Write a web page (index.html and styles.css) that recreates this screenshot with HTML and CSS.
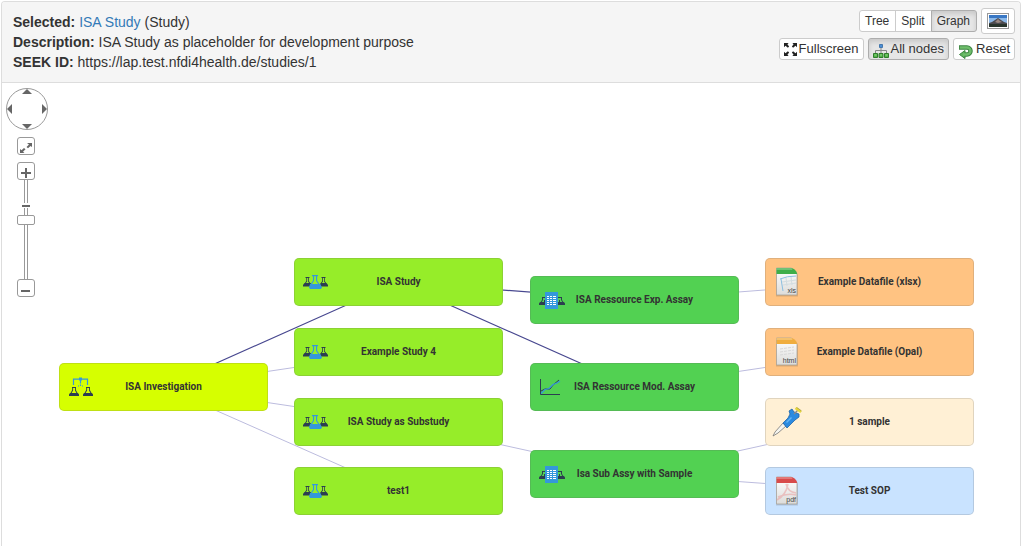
FILE: index.html
```html
<!DOCTYPE html>
<html lang="en">
<head>
<meta charset="utf-8">
<title>ISA Study</title>
<link rel="stylesheet" href="styles.css">
</head>
<body>
<svg class="defs" aria-hidden="true">
  <symbol id="i-study" viewBox="0 0 25 15">
    <g fill="#2c3e50">
      <path d="M2.500 2h4v1h-4zM3.300 3h.8v3.400L2 9.300h-.9L3.300 6zM5 3h.8v3.100L8 9.300H7L5 6.400zM1.500 8h6l1 1.500v2.100H0V10z"/>
      <path d="M18.500 2h4v1h-4zM19.200 3h.8v3.400l-2.100 2.900h-.9L19.200 6zM21 3h.8v3.100L24 9.300h-1L21 6.400zM17.500 8h6l1.500 2v1.600h-8.500z"/>
    </g>
    <path fill="#3498db" d="M9 0h6v1.200H9zM10 1h1.100v4.700L8.300 10H7l3-4.500zM13 1h1.100v4.500l3 4.500h-1.300L13 5.700zM7 9h10.300l1.700 3.500-1 1.500H7l-1-1.500z"/>
  </symbol>
  <symbol id="i-assay" viewBox="0 0 26 17">
    <path fill="#2c3e50" d="M3 5h4v1H3zM3 6h1v2L2 11H1l2-3zM5 8h1v2H5zM1 10h6v3H0v-1.500zM19 5h4v1h-4zM22 6h1v2l2 3h-1l-2-3zM20 8h1v2h-1zM19 10h6l1 1.500V13h-7z"/>
    <path fill="#3498db" d="M6 0h13v17H6z"/>
    <path fill="#fff" d="M8 4h2v1H8zM11 4h2v1h-2zM14 4h3v1h-3zM8 6h2v1H8zM11 6h2v1h-2zM14 6h3v1h-3zM8 8h2v1H8zM11 8h2v1h-2zM14 8h3v1h-3zM8 10h2v1H8zM11 10h2v1h-2zM14 10h3v1h-3zM8 12h2v1H8zM11 12h2v1h-2zM14 12h3v1h-3z"/>
  </symbol>
  <symbol id="i-model" viewBox="0 0 22 17">
    <path fill="none" stroke="#2c3e50" d="M1.500 0v15.500H21M2 12l4-2h5l3-4 6-5"/>
    <path fill="none" stroke="#3498db" stroke-width="1.200" d="M2 14.500l4-4 4-1 4-4 4-1.500 3-2"/>
  </symbol>
  <symbol id="i-investigation" viewBox="0 0 24 20">
    <path fill="none" stroke="#3498db" stroke-width="1.200" d="M4.500 8V2.200h14V8M11.500 2v4.500M11.500 7.500v1.500M9 9h1M13 9h1"/>
    <path fill="#3498db" d="M10 .5h3v3h-3z"/>
    <g fill="#2c3e50">
      <path d="M3 10h4v1H3zM3.200 11h.9v2.500L2 17H1l2.200-4zM6 11h.9v2l2.200 4H8l-2-3.500zM1 16h8l1 1.500V19H0v-1.500z"/>
      <path d="M17 10h4v1h-4zM17.200 11h.9v2.500L16 17h-1l2.200-4zM20 11h.9v2l2.200 4H22l-2-3.500zM15 16h8l1 1.500V19H14v-1.500z"/>
    </g>
  </symbol>
  <linearGradient id="paper" x2="0" y2="1"><stop offset="0" stop-color="#fff"/><stop offset="1" stop-color="#dcdcda"/></linearGradient>
  <symbol id="i-file" viewBox="0 0 24 30">
    <path fill="#0002" d="M1 2h16l6 6v21.500H1z"/>
    <path fill="url(#paper)" stroke="#aaa39a" stroke-width=".8" d="M1.500 1h15l5.500 5.500V28h-20.500z"/>
    <path fill="currentColor" d="M1.500 1h15q4 1 5.500 5v1H1.500z"/>
    <path fill="#fff" opacity=".25" d="M1.500 1h15l1 2h-16z"/>
  </symbol>
</svg>

<section class="panel">
  <header class="head">
    <div class="info">
      <div><b>Selected:</b> <a href="#">ISA Study</a> (Study)</div>
      <div><b>Description:</b> ISA Study as placeholder for development purpose</div>
      <div><b>SEEK ID:</b> https://lap.test.nfdi4health.de/studies/1</div>
    </div>
    <div class="actions">
      <div class="row">
        <div class="group">
          <button class="btn">Tree</button><button class="btn">Split</button><button class="btn active">Graph</button>
        </div>
        <button class="btn picture" aria-label="Save picture">
          <svg width="22" height="16" viewBox="0 0 22 16">
            <path fill="#999" d="M0 0h22v16H0z"/><path fill="#fff" d="M1 1h20v14H1z"/>
            <path fill="#3977c4" d="M2 2h18v4H2z"/><path fill="#8db9e8" d="M2 5h18v6H2z"/>
            <path fill="#4c4b50" d="M2 10l3-1 3-2 3-2 3 2 3 2 3 1v2H2z"/><path fill="#9c8982" d="M8 9l3-3 2 2 2 1-4 1z"/>
            <path fill="#29352d" d="M2 11h18v3H2z"/>
          </svg>
        </button>
      </div>
      <div class="row">
        <button class="btn tool">
          <svg width="13" height="13" viewBox="0 0 14 14"><path fill="#222" d="M0 0h5L3.700 1.300 5.500 3.700 4.200 5 1.600 3 0 4.500zM14 0H9l1.300 1.300L8.500 3.700 9.800 5 12.400 3 14 4.500zM0 14h5l-1.300-1.300L5.500 10.300 4.200 9 1.600 11 0 9.500zM14 14H9l1.300-1.300L8.500 10.300 9.800 9l2.600 2L14 9.500z"/></svg>
          Fullscreen</button>
        <button class="btn tool active">
          <svg class="low" width="16" height="14" viewBox="0 0 16 14">
            <path fill="none" stroke="#888" d="M8 4v5M2.500 9V6.500h11V9"/>
            <path fill="#4d8fd6" stroke="#4478ad" d="M6.500.5h3v3h-3z"/>
            <path fill="#55b24a" stroke="#2f7d2b" d="M.5 9.500h4v4h-4zM6 9.500h4v4H6zM11.500 9.500h4v4h-4z"/>
            <path fill="#8dde82" d="M1.500 10.500h2v1h-2zM7 10.500h2v1H7zM12.500 10.500h2v1h-2z"/>
          </svg>
          All nodes</button>
        <button class="btn tool">
          <svg class="low" width="16" height="15" viewBox="0 0 16 15">
            <path fill="none" stroke="#3b8440" stroke-width="4.500" d="M1 3.500h8a3.200 3.200 0 0 1 0 7H6"/>
            <path fill="#5fb45d" stroke="#3b8440" d="M7 6.500v8l-5.500-4z"/>
            <path fill="none" stroke="#6fbd6b" stroke-width="2.500" d="M1.800 3.500H9a3.200 3.200 0 0 1 0 7H5"/>
          </svg>
          Reset</button>
      </div>
    </div>
  </header>

  <div class="graph">
    <svg class="edges" width="1018" height="463" viewBox="0 0 1018 463" fill="none" aria-hidden="true">
      <g stroke="#bcbcde">
        <path d="M161 304L396 269M161 304L396 339M161 304L396 408M396 339L632 391M632 217L867 199M632 304L867 269M632 391L867 339M632 391L867 408"/>
      </g>
      <g stroke="#47478f" stroke-width="1.200">
        <path d="M161 304L396 199L632 217M396 199L632 304"/>
      </g>
    </svg>

    <div class="zoomer">
      <div class="pan">
        <button class="up" aria-label="Pan up"></button>
        <button class="left" aria-label="Pan left"></button>
        <button class="right" aria-label="Pan right"></button>
        <button class="down" aria-label="Pan down"></button>
      </div>
      <button class="sq fit" aria-label="Fit">
        <svg width="12" height="12" viewBox="0 0 12 12"><path fill="#666" d="M7 1h5v4L10.500 4 8 6.300 6.500 5 9 2.500zM0 7l1.500 1.200L4 6l1.500 1.300L3 9.700 4.500 11H0z"/></svg>
      </button>
      <button class="sq" aria-label="Zoom in">
        <svg width="10" height="10" viewBox="0 0 10 10"><path fill="#666" d="M4 0h2v4h4v2H6v4H4V6H0V4h4z"/></svg>
      </button>
      <div class="track">
        <span class="tick"></span>
        <input type="range" min="0" max="100" value="61" aria-label="Zoom">
      </div>
      <button class="sq" aria-label="Zoom out">
        <svg width="10" height="10" viewBox="0 0 10 10"><path fill="#666" d="M0 5h9v2H0z"/></svg>
      </button>
    </div>

    <div class="node investigation c1 r5"><svg class="ico" width="24" height="20"><use href="#i-investigation"/></svg>ISA Investigation</div>
    <div class="node study c2 r1"><svg class="ico" width="25" height="15"><use href="#i-study"/></svg>ISA Study</div>
    <div class="node study c2 r3"><svg class="ico" width="25" height="15"><use href="#i-study"/></svg>Example Study 4</div>
    <div class="node study c2 r6"><svg class="ico" width="25" height="15"><use href="#i-study"/></svg>ISA Study as Substudy</div>
    <div class="node study c2 r8"><svg class="ico" width="25" height="15"><use href="#i-study"/></svg>test1</div>
    <div class="node assay c3 r2"><svg class="ico" width="26" height="17"><use href="#i-assay"/></svg>ISA Ressource Exp. Assay</div>
    <div class="node assay c3 r5"><svg class="ico" width="22" height="17"><use href="#i-model"/></svg>ISA Ressource Mod. Assay</div>
    <div class="node assay c3 r7"><svg class="ico" width="26" height="17"><use href="#i-assay"/></svg>Isa Sub Assy with Sample</div>
    <div class="node data c4 r1">
      <svg class="ico xls" width="24" height="30" viewBox="0 0 24 30"><use href="#i-file"/><path fill="none" stroke="#8bbfe0" d="M5 12q7-3 16-3M6 12l2 12"/><path fill="none" stroke="#d3dde0" d="M7 15l14-2M8 18l13-2M11 11l1 8M16 10l1 8"/><text x="21" y="26" text-anchor="end">xls</text></svg>Example Datafile (xlsx)</div>
    <div class="node data c4 r3">
      <svg class="ico html" width="24" height="30" viewBox="0 0 24 30"><use href="#i-file"/><path stroke="#d8d8d8" stroke-dasharray="3 1" d="M5 12l14-2M5 15l14-2M5 18l14-2"/><text x="21" y="26" text-anchor="end">html</text></svg>Example Datafile (Opal)</div>
    <div class="node sample c4 r6">
      <svg class="ico wide" width="30" height="30" viewBox="0 0 30 30">
        <path fill="#f5f5ef" stroke="#777" stroke-width=".8" d="M1 29l2-4 8-9 3 3-8 7z"/>
        <path fill="#2b8ae0" stroke="#1f65a8" stroke-width=".8" d="M11 16l5-5 2-4-1-3 3-2 2 3 5 2v3l-4 3-8 8z"/>
        <path fill="#63b4f4" d="M14 15l5-5 1 1-5 5z"/>
        <path stroke="#888" stroke-width="1.500" d="M22 7l4-4"/><path stroke="#e4d53c" stroke-width="2.500" d="M23.500 1l5.500 4"/><path stroke="#8d8528" stroke-width=".6" d="M24.500.2l5 3.700"/>
      </svg>1 sample</div>
    <div class="node sop c4 r8">
      <svg class="ico pdf" width="24" height="30" viewBox="0 0 24 30"><use href="#i-file"/><path fill="none" stroke="#e9a5a5" stroke-width="1.500" d="M2 24q9-5 11-16M11 8q2 8 10 9M3 21q9-4 18-2" opacity=".6"/><text x="21" y="26" text-anchor="end">pdf</text></svg>Test SOP</div>
  </div>
</section>
</body>
</html>
```
FILE: styles.css
```css
* { box-sizing: border-box; }
body {
  margin: 1px 0 0 1px;
  background: #fff;
  color: #333;
  font: 14px/20px "Liberation Sans", Arial, sans-serif;
}
button { padding: 0; font: inherit; color: inherit; cursor: pointer; }
svg { display: block; flex: none; }
.defs { position: absolute; width: 0; height: 0; }

.panel {
  min-height: calc(100vh - 1px);
  border: 1px solid #ddd;
  border-bottom: 0;
  border-radius: 4px 4px 0 0;
}
.head {
  display: flex;
  justify-content: space-between;
  min-height: 81px;
  background: #f5f5f5;
  border-bottom: 1px solid #ddd;
  border-radius: 3px 3px 0 0;
}
.info { padding: 10px 11px; }
.info a { color: #337ab7; text-decoration: none; }

.actions {
  display: flex;
  flex-direction: column;
  align-items: flex-end;
  gap: 4px;
  padding: 6px 5px 0 0;
}
.row, .group { display: flex; align-items: center; }
.row { gap: 4px; }
.btn {
  display: flex;
  align-items: center;
  gap: 2px;
  height: 22px;
  padding: 0 5px;
  border: 1px solid #ccc;
  border-radius: 3px;
  background: #fff;
  font-size: 12px;
  line-height: 18px;
}
.btn.active {
  background: #e6e6e6;
  border-color: #adadad;
  box-shadow: inset 0 3px 5px rgba(0, 0, 0, .125);
}
.group .btn { padding-right: 6px; border-radius: 0; }
.group .btn + .btn { margin-left: -1px; }
.group .btn:first-child { border-radius: 3px 0 0 3px; }
.group .btn:last-child { border-radius: 0 3px 3px 0; }
.tool { padding: 0 4px; font-size: 13px; }
.low { margin-top: 4px; }
.picture { height: 26px; }

.graph { position: relative; min-height: 463px; overflow: hidden; }
.edges { position: absolute; top: 0; left: 0; }

.node {
  position: absolute;
  display: flex;
  align-items: center;
  justify-content: center;
  width: 209px;
  height: 48px;
  border: 1px solid rgba(102, 102, 102, .2);
  border-radius: 5px;
  font: bold 10px/12px Roboto, "Liberation Sans", sans-serif;
}
.ico { position: absolute; left: 8px; }
.investigation .ico, .xls, .html, .pdf { left: 9px; }
.node .wide { left: 6px; }
.ico text { font: 7px "Liberation Sans", sans-serif; fill: #444; }
.xls { color: #3fae49; }
.html { color: #f0ad3e; }
.pdf { color: #d84b4b; }

.investigation { background: #d6ff00; }
.study { background: #96ed29; }
.assay { background: #52d152; }
.data { background: #ffc382; }
.sample { background: #fff0d5; }
.sop { background: #c9e3ff; }

.c1 { left: 57px; }
.c2 { left: 292px; }
.c3 { left: 528px; }
.c4 { left: 763px; }
.r1 { top: 175px; }
.r2 { top: 193px; }
.r3 { top: 245px; }
.r5 { top: 280px; }
.r6 { top: 315px; }
.r7 { top: 367px; }
.r8 { top: 384px; }

.zoomer {
  position: absolute;
  top: 5px;
  left: 4px;
  display: flex;
  flex-direction: column;
}
.pan {
  display: grid;
  grid-template: repeat(3, 1fr) / repeat(3, 1fr);
  place-items: center;
  width: 42px;
  height: 42px;
  border: 1px solid #999;
  border-radius: 50%;
  background: #fff;
}
.pan button { border: 0; background: #666; }
.up, .down { width: 10px; height: 5px; grid-column: 2; }
.left, .right { width: 5px; height: 10px; grid-row: 2; }
.up { grid-row: 1; align-self: start; clip-path: polygon(50% 0, 100% 100%, 0 100%); }
.down { grid-row: 3; align-self: end; clip-path: polygon(0 0, 100% 0, 50% 100%); }
.left { grid-column: 1; justify-self: start; clip-path: polygon(0 50%, 100% 0, 100% 100%); }
.right { grid-column: 3; justify-self: end; clip-path: polygon(0 0, 100% 50%, 0 100%); }
.sq {
  display: grid;
  place-items: center;
  width: 18px;
  height: 18px;
  margin-left: 11px;
  padding-top: 4px;
  border: 1px solid #999;
  border-radius: 3px;
  background: #fff;
}
.fit { margin-top: 7px; margin-bottom: 7px; }
.track {
  position: relative;
  width: 18px;
  height: 99px;
  margin-left: 11px;
  background: linear-gradient(90deg, #999 1px, #fff 1px 3px, #999 3px) center / 4px 100% no-repeat;
}
.tick {
  position: absolute;
  top: 23px;
  left: 5px;
  width: 8px;
  height: 5px;
  border: solid #fff;
  border-width: 2px 0 1px;
  background: #666;
}
.track input {
  position: absolute;
  inset: 0;
  width: 18px;
  height: 99px;
  margin: 0;
  appearance: none;
  background: none;
  writing-mode: vertical-lr;
  direction: rtl;
}
.track input::-webkit-slider-thumb {
  appearance: none;
  width: 18px;
  height: 10px;
  border: 1px solid #999;
  border-radius: 2px;
  background: #fff;
}
```
